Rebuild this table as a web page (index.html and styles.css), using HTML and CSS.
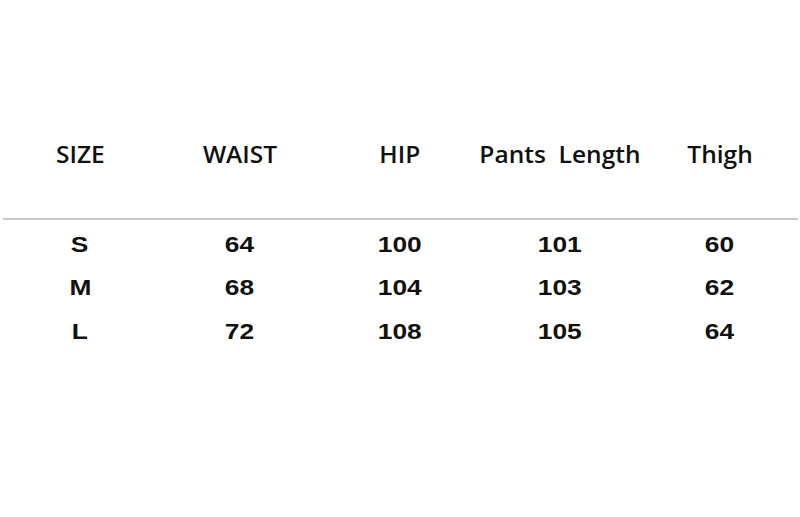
FILE: index.html
```html
<!DOCTYPE html>
<html>
<head>
<meta charset="utf-8">
<link rel="stylesheet" href="styles.css">
</head>
<body>
<div class="chart">
  <div class="head">
    <div class="cell"><span>SIZE</span></div>
    <div class="cell"><span>WAIST</span></div>
    <div class="cell"><span>HIP</span></div>
    <div class="cell"><span>Pants&nbsp; Length</span></div>
    <div class="cell"><span>Thigh</span></div>
  </div>
  <div class="rule"></div>
  <div class="body">
    <div class="row"><div class="cell"><span>S</span></div><div class="cell"><span>64</span></div><div class="cell"><span>100</span></div><div class="cell"><span>101</span></div><div class="cell"><span>60</span></div></div>
    <div class="row"><div class="cell"><span>M</span></div><div class="cell"><span>68</span></div><div class="cell"><span>104</span></div><div class="cell"><span>103</span></div><div class="cell"><span>62</span></div></div>
    <div class="row"><div class="cell"><span>L</span></div><div class="cell"><span>72</span></div><div class="cell"><span>108</span></div><div class="cell"><span>105</span></div><div class="cell"><span>64</span></div></div>
  </div>
</div>
</body>
</html>
```
FILE: styles.css
```css
html, body {
  margin: 0;
  padding: 0;
  background: #ffffff;
}
.chart {
  width: 800px;
  height: 517px;
  padding-top: 140px;
  box-sizing: border-box;
  color: #111111;
}
.head {
  display: grid;
  grid-template-columns: repeat(5, 160px);
  font-family: "Open Sans", sans-serif;
  font-weight: 600;
  font-size: 22.5px;
  line-height: 30px;
  padding-bottom: 48px;
}
.head .cell span { transform: scaleX(1.09); }
.rule {
  height: 2px;
  margin: 0 2px 0 3px;
  background: #c8c8c8;
}
.body {
  padding-top: 2.5px;
  font-family: "Liberation Sans", Arial, sans-serif;
  font-weight: bold;
  font-size: 22.5px;
  line-height: 43.5px;
}
.row {
  display: grid;
  grid-template-columns: repeat(5, 160px);
}
.cell {
  text-align: center;
  white-space: nowrap;
}
.cell span {
  display: inline-block;
  transform: scaleX(1.17);
}
```
